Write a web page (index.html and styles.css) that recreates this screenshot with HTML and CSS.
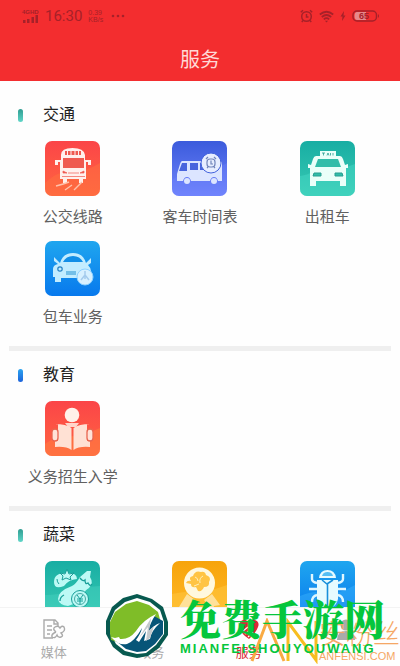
FILE: index.html
```html
<!DOCTYPE html>
<html lang="zh-CN">
<head>
<meta charset="utf-8">
<meta name="viewport" content="width=device-width, initial-scale=1">
<title>服务</title>
<link rel="stylesheet" href="styles.css">
</head>
<body>
<header class="header">
  <div class="status">
    <div class="status-group">
      <div class="signal">
        <span class="network">4GHD</span>
        <svg width="17" height="8" viewBox="0 0 17 8" fill="currentColor"><path d="M1 5h2.500v3H1zM5 4h2.500v4H5zM9.500 2H12v6H9.500zM13.500 0H16v8h-2.500z"/></svg>
      </div>
      <span class="clock">16:30</span>
      <span class="speed"><span>0.39</span><span>KB/s</span></span>
      <svg width="14" height="4" viewBox="0 0 14 4" fill="currentColor"><circle cx="2" cy="2" r="1.300"/><circle cx="7" cy="2" r="1.300"/><circle cx="12" cy="2" r="1.300"/></svg>
    </div>
    <div class="status-group">
      <svg width="13" height="14" viewBox="0 0 13 14" fill="none" stroke="currentColor" stroke-width="1.500"><circle cx="6.500" cy="7.500" r="4.800"/><path d="M6.500 5v3h2M.8 3.300 3 1.300M12.200 3.300 10 1.300M3 11.500 1.800 13M10 11.500l1.200 1.500"/></svg>
      <svg width="15" height="13" viewBox="0 0 15 13" fill="none" stroke="currentColor" stroke-width="1.700"><path d="M.8 4.500Q7.500-1 14.200 4.500M2.800 7Q7.500 3 12.200 7M4.800 9.300Q7.500 7 10.200 9.300"/><path d="M6 10.700h3l-1.500 1.800z" fill="currentColor" stroke="none"/></svg>
      <svg width="6" height="10" viewBox="0 0 6 10" fill="currentColor"><path d="M4 0 .5 5.500h2L2 10l3.500-5.500h-2z"/></svg>
      <div class="battery">
        <svg width="28" height="12" viewBox="0 0 28 12"><path d="M5 2h9v8H5Q2.500 10 2.500 6T5 2" fill="#e68a8c"/><rect x="1" y="1" width="23.500" height="10" rx="4" fill="none" stroke="currentColor" stroke-width="1.500"/><path d="M26 4q2 2 0 4z" fill="currentColor"/></svg>
        <span class="charge">65</span>
      </div>
    </div>
  </div>
  <h1 class="title">服务</h1>
</header>

<main class="content">
  <section class="group">
    <h2 class="group-title">交通</h2>
    <div class="grid">
      <a class="service" href="#">
        <svg class="tile coral" viewBox="0 0 55 55">
          <path d="M0 42Q14 29 25 31t30-9v33H0z" fill="#ff7441" opacity=".45"/>
          <path d="M16 14q0-7 11.500-7T40 14v5h6v5h-3v-3h-2v17h-3v4h-4v-4H22v4h-4v-4h-3V21h-2v3h-3v-5h6z" fill="#fff0ed"/>
          <path d="M20 10h16v4H20zM18 17h21v10H18z" fill="#ef5a50"/>
          <path d="M22.500 10v4M26 10v4M30 10v4M33.500 10v4" stroke="#fff0ed"/>
          <path d="m18 30 4 2h-4zM39 30l-4 2h4zM23 32h11M17 35.500h23" fill="#ef5a50" stroke="#ef5a50" stroke-width=".7"/>
          <path d="M11 45q8-2 13-4M20 49l7-5M29 49l8-8" stroke="#ffc1aa" stroke-width="1.400" fill="none"/>
        </svg>
        <span class="label">公交线路</span>
      </a>
      <a class="service" href="#">
        <svg class="tile indigo" viewBox="0 0 55 55">
          <path d="M0 39Q12 29 24 31t31-9v33H0z" fill="#7184ff" opacity=".35"/>
          <path d="M10 20h37q3 0 3 3v17h-4q-1-4-4-4t-4 4H19q-1-4-4-4t-4 4H5v-7l3-10q1-3 2-3" fill="#dce5ff"/>
          <path d="M10 22h5v8H7zM18 22h8v7h-8zM28 22h5v7h-5z" fill="#4965dd"/>
          <circle cx="15" cy="40" r="3" fill="#dce5ff"/><circle cx="42" cy="40" r="3" fill="#dce5ff"/>
          <circle cx="39" cy="22" r="10" fill="#e7edff" stroke="#4262dc"/>
          <g fill="none" stroke="#7184ba" stroke-width="1.200"><rect x="35" y="18" width="8" height="8" rx="3"/><path d="M39 19.500V23h2M34 18l2-2M44 18l-2-2M35 27l1-1M43 27l-1-1"/></g>
        </svg>
        <span class="label">客车时间表</span>
      </a>
      <a class="service" href="#">
        <svg class="tile teal" viewBox="0 0 55 55">
          <path d="M0 35q8-1 14-5t18 1l23-8v32H0z" fill="#49dcc7" opacity=".45"/>
          <path d="M20 10h16v5h4q2 0 3 3l2 6 3-1v4h-2v18h-6v-5H16v5h-6V27H8v-4l3 1 2-6q1-3 3-3h4z" fill="#eafff9"/>
          <path d="M18 18h20l3 8H15z" fill="#32bda9"/>
          <path d="M14 32h7v3h-8zM42 32h-7v3h8z" fill="#32bda9" stroke="#279d90"/>
          <path d="M22 12h3m-1.500 0v2.500M27 14.500l1-2.500 1 2.500M30.500 12v2.500M33 12v2.500" stroke="#279d90" fill="none" stroke-width=".8"/>
        </svg>
        <span class="label">出租车</span>
      </a>
      <a class="service" href="#">
        <svg class="tile blue" viewBox="0 0 55 55">
          <path d="M15 22q3-10 13-10t13 10l5-5v5l-3 2q3 3 3 6v7H16v4h-6v-5H8v-8q0-4 5-5l-4-3v-4z" fill="#c2ecff"/>
          <path d="M18 21q3-6 10-6t10 6z" fill="#118ee7"/>
          <circle cx="15" cy="28" r="2.200" fill="none" stroke="#2782c4" stroke-width="1.200"/>
          <path d="M21 30h10v4H21z" fill="#73bfe8"/>
          <circle cx="40" cy="36" r="8" fill="#d7f0ff" stroke="#8ed1ff"/>
          <path d="M40 30v8M36 39l4-5 4 5" stroke="#a5cbed" fill="none" stroke-width="1.500"/>
        </svg>
        <span class="label">包车业务</span>
      </a>
    </div>
  </section>

  <section class="group">
    <h2 class="group-title azure">教育</h2>
    <div class="grid">
      <a class="service" href="#">
        <svg class="tile coral" viewBox="0 0 55 55">
          <path d="M0 43q13-10 23-8t32-8v28H0z" fill="#ff7941" opacity=".6"/>
          <circle cx="27" cy="14" r="7.300" fill="#fff1e9"/>
          <path d="M20 22h14l-3 4h-8z" fill="#ffd6cb"/>
          <path d="M10 23q11 0 16.500 4v22Q21 45 10 46v-6M45 23q-11 0-16.500 4v22Q34 45 45 46v-6M10 23v17h3V23M45 23v17h-3V23" fill="#ffe1d4"/>
          <g fill="#ffe2d7" stroke="#e9654f" stroke-width="1.300"><rect x="7" y="28" width="6" height="12" rx="3"/><rect x="42" y="28" width="6" height="12" rx="3"/></g>
        </svg>
        <span class="label">义务招生入学</span>
      </a>
    </div>
  </section>

  <section class="group">
    <h2 class="group-title">蔬菜</h2>
    <div class="grid">
      <a class="service" href="#">
        <svg class="tile teal" viewBox="0 0 55 55">
          <path d="M0 34q14 0 23-4t32-5v30H0z" fill="#43cfbe" opacity=".5"/>
          <path d="M21 12q11-1 11 6-9 1-13 7-10 4-10-4 0-9 12-9" fill="#bdf9f5"/>
          <path d="m15 12 5 1 2-5 2 5 5-1-4 4 1 3-5-2-4 2 1-4z" fill="#bdf9f5" stroke="#179e98"/>
          <path d="M12 18q0 3 2 5" stroke="#179e98" fill="none"/>
          <path d="M42 10h4l-1 6q4 6-1 11-4 2-6 7-4 8-15 11-9-1-10-7 0-8 14-13 4-2 8-9z" fill="#bdf9f5"/>
          <path d="M35 17q3 4 5 2 0 5 3 3 2 4 4 1M19 34q-4 2-4 6" stroke="#179e98" stroke-width="1.300" fill="none"/>
          <circle cx="35" cy="38" r="8.500" fill="#bdf9f5" stroke="#179e98"/><circle cx="35" cy="38" r="5.500" fill="none" stroke="#47aaa5"/>
          <path d="m32 34 3 4 3-4M32 38h6M32 40h6M35 38v5" stroke="#179e98" fill="none"/>
        </svg>
      </a>
      <a class="service" href="#">
        <svg class="tile amber" viewBox="0 0 55 55">
          <path d="M0 33q15-3 24-2t31-7v31H0z" fill="#ffc842" opacity=".5"/>
          <path d="m15 33-8 13h6l2 6 8-13zM40 33l8 11-6 1-1 6-9-12z" fill="#ffe19a"/>
          <circle cx="27.500" cy="22" r="15.500" fill="#fff8df"/>
          <path d="M19 20q-3-4 2-5 2-6 8-4 4-1 5 3 6 2 3 7 1 5-5 5-2 5-6 4l-2-4q-5 1-5-3l-5-1q1-3 5-2" fill="#ffc444"/>
          <path d="M23 16q3 1 3 4M31 15q-4 2-3 7M22 25l5-2" stroke="#fff0b8" fill="none"/>
        </svg>
      </a>
      <a class="service" href="#">
        <svg class="tile blue" viewBox="0 0 55 55">
          <path d="M0 35q14-6 25-3t30-8v31H0z" fill="#42b9ff" opacity=".4"/>
          <path d="M19 17q1-8 8.500-8t8.500 8z" fill="#e7fbff"/>
          <path d="M22 15q1-4 5.500-4t5.500 4z" fill="#56bef3"/>
          <path d="M17 19h21v19q-2 9-10.500 9T17 38z" fill="#e7fbff"/>
          <path d="M27.500 22v25M22 19l5 4 6-4" stroke="#198fda" stroke-width="1.600" fill="none"/>
          <path d="M12 13v5q0 3 5 4M43 13v5q0 3-5 4M9 28h8M38 28h8M17 34q-5 1-5 7M38 34q5 1 5 7" stroke="#dff7ff" stroke-width="2.400" fill="none"/>
        </svg>
      </a>
    </div>
  </section>
</main>

<nav class="tabs">
  <a class="tab" href="#">
    <svg width="24" height="24" viewBox="0 0 24 24" fill="none" stroke="currentColor" stroke-width="1.400"><path d="M16 8V5l-3-3H2v18h9M12 2v4h4M5 8h5M5 12h5M5 16h3"/><path d="M14 14q-4-3-1-5 3-2 5 1 2-3 4-1 2 4-3 6 3 3 0 4-3 1-4-2-2 4-5 2-1-3 4-5"/></svg>
    <span>媒体</span>
  </a>
  <a class="tab" href="#">
    <svg width="24" height="24" viewBox="0 0 24 24" fill="none" stroke="currentColor" stroke-width="1.400"><path d="M4 3h16v18H4zM8 8h8M8 12h8M8 16h5"/></svg>
    <span>政务</span>
  </a>
  <a class="tab active" href="#">
    <svg width="24" height="24" viewBox="0 0 24 24" fill="currentColor"><path d="M12 6q2-5 6-4 5 2 3 7-2 6-9 12Q4 16 3 10 1 4 6 2q4-1 6 4"/><path d="m6 13 5-4M8 16l5-4M11 19l5-5" stroke="#fff" stroke-width="1.200"/></svg>
    <span>服务</span>
  </a>
  <a class="tab" href="#" aria-label="我的">
    <svg width="24" height="24" viewBox="0 0 24 24" fill="currentColor"><circle cx="12" cy="7" r="5.500"/><path d="M3 22q0-9 9-9t9 9z"/></svg>
  </a>
</nav>

<div class="stamp fans">
  <svg width="70" height="46" viewBox="0 0 70 46" fill="none" stroke-width="3"><path d="M3 43 18 3l17 40" stroke="#f9aa42"/><path d="M39 43V4l28 38V3" stroke="#f7bd20"/></svg>
  <div class="fans-text"><span class="fans-name">安粉丝</span><span class="fans-site">ANFENSI.COM</span></div>
</div>
<div class="stamp games">
  <svg width="68" height="68" viewBox="0 0 68 68">
    <path d="m34 1 15 5 11 8 5 15v13l-9 13-11 8-11 2-14-3-10-8-7-13V28l6-14L20 5z" fill="#07594f"/>
    <path d="m34 5 13 4 10 8 4 12v12l-8 11-10 8-9 1-12-3-9-7-6-11V28l5-11L22 9z" fill="#fff"/>
    <path d="m34 8 12 4 9 7 3 11-7-5-8 5-8 6-7 11-13 2-7-2-1-7V29l5-10 11-8z" fill="#7fbd28"/>
    <path d="M60 28v13l-8 10-9 7-9 1-11-3-10-8q12 1 17-6l11-13 10-6z" fill="#075578"/>
    <path d="M8 44l4 1 4-1 1 2q9 1 16-8 7-11 20-17-6 9-8 18 6-7 12-9-9 8-10 16l-6 2 2-10-7 11-3-2q5-7 6-12-8 14-15 16-8 2-16-7" fill="#fff"/>
    <path d="m48 25-12 20 9-11-2 14 4-3 4-12-5 5z" fill="#c4c9cc"/>
  </svg>
  <div class="games-text"><span class="games-name">免费手游网</span><span class="games-site">MIANFEISHOUYOUWANG</span></div>
</div>
</body>
</html>
```
FILE: styles.css
```css
* { box-sizing: border-box; }

body {
  margin: 0;
  height: 100vh;
  position: relative;
  display: flex;
  flex-direction: column;
  overflow: hidden;
  background: #fefefe;
  font-family: "Liberation Sans", "Noto Sans CJK SC", sans-serif;
}

a { color: inherit; text-decoration: none; }
svg { display: block; flex: none; }

.header { flex: none; background: #f32d2f; padding-bottom: 1px; }
.status {
  display: flex;
  justify-content: space-between;
  height: 32px;
  padding: 0 20px 0 22px;
  color: #a62129;
}
.status-group { display: flex; align-items: center; gap: 6px; }
.signal { width: 17px; }
.network { display: block; font-size: 6px; font-weight: 700; line-height: 6px; }
.clock { font-family: Roboto, sans-serif; font-size: 15px; line-height: 20px; }
.speed { display: flex; flex-direction: column; width: 17px; font-size: 7px; line-height: 7px; }
.battery { position: relative; }
.charge {
  position: absolute;
  inset: 0 4px 0 0;
  text-align: center;
  font-size: 9px;
  font-weight: 700;
  line-height: 12px;
}
.title {
  margin: 0;
  padding-top: 8px;
  text-align: center;
  font-size: 20px;
  font-weight: 400;
  line-height: 40px;
  color: #ffd9d6;
}

.content { flex: 1; min-height: 0; overflow: hidden; padding: 10px 9px 0; }
.group { padding-bottom: 5px; border-bottom: 5px solid #efefef; }
.group-title {
  display: flex;
  align-items: center;
  gap: 20px;
  margin: 0 0 2px;
  padding-left: 9px;
  font-size: 16px;
  font-weight: 400;
  line-height: 48px;
  color: #222;
}
.group-title::before {
  content: "";
  width: 5px;
  height: 13px;
  border-radius: 3px;
  background: linear-gradient(#2f9c91, #5fd6c8);
}
.group-title.azure::before { background: linear-gradient(#2ba4f0, #1c62da); }
.grid { display: grid; grid-template-columns: repeat(3, 1fr); grid-auto-rows: 100px; }
.service { display: flex; flex-direction: column; align-items: center; gap: 11px; }
.tile { width: 55px; height: 55px; border-radius: 7px; }
.coral { background: linear-gradient(#fb4548, #ff6540); }
.indigo { background: linear-gradient(#3b5bdc, #7084fb); }
.teal { background: linear-gradient(#18aea3, #38c9b3); }
.blue { background: linear-gradient(#1fa6ef, #0879ed); }
.amber { background: linear-gradient(#f7a40c, #ffb927); }
.label { font-size: 15px; line-height: 20px; color: #606060; white-space: nowrap; }

.tabs {
  flex: none;
  display: grid;
  grid-template-columns: repeat(4, 1fr);
  height: 59px;
  padding: 10px 5px 0;
  border-top: 1px solid #f3f3f3;
}
.tab {
  display: flex;
  flex-direction: column;
  align-items: center;
  gap: 2px;
  font-size: 13px;
  line-height: 18px;
  color: #aaa;
}
.tab.active { color: #dc2936; }

.stamp { position: absolute; display: flex; pointer-events: none; white-space: nowrap; }
.fans { right: 0; bottom: 2px; color: #f5a765; }
.fans-text { display: flex; flex-direction: column; }
.fans-name { font-family: "Noto Sans CJK SC", sans-serif; font-size: 27px; font-weight: 300; line-height: 30px; }
.fans-site { font-size: 11px; line-height: 16px; }
.games { left: 103px; bottom: 5px; gap: 9px; align-items: center; }
.games-text { display: flex; flex-direction: column; color: #05c63c; }
.games-name { font-family: "Noto Serif CJK SC", "Noto Sans CJK SC", serif; font-size: 41px; font-weight: 900; line-height: 44px; }
.games-site { font-size: 13px; font-weight: 700; line-height: 18px; letter-spacing: 2px; }
```
